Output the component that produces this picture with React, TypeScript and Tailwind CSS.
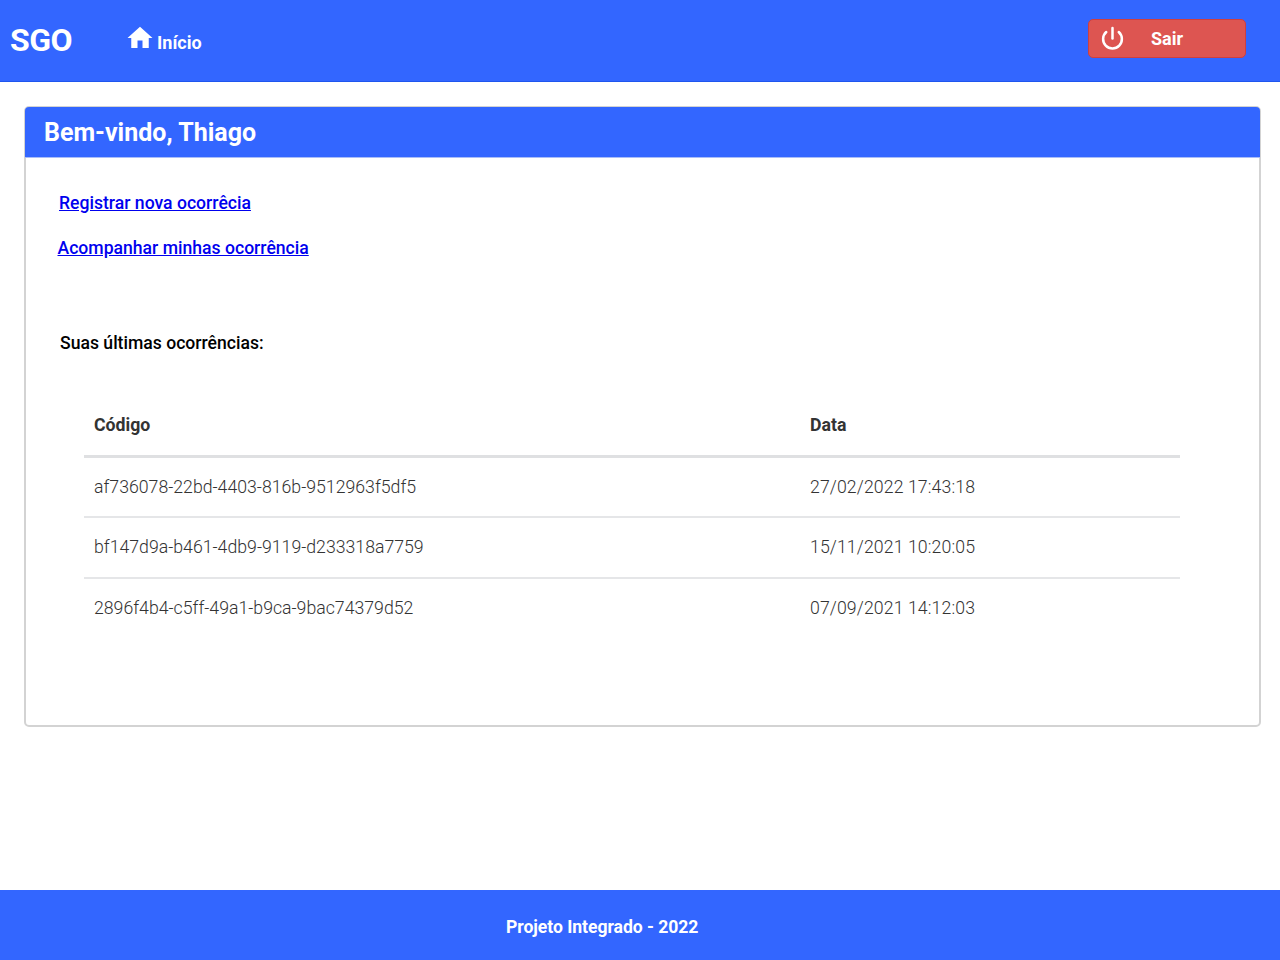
import React from "react";

const rows = [
  ["af736078-22bd-4403-816b-9512963f5df5", "27/02/2022 17:43:18"],
  ["bf147d9a-b461-4db9-9119-d233318a7759", "15/11/2021 10:20:05"],
  ["2896f4b4-c5ff-49a1-b9ca-9bac74379d52", "07/09/2021 14:12:03"],
];

export default function App() {
  return (
    <div className="flex h-[960px] flex-col bg-white font-['Roboto',sans-serif]">
      <header className="flex h-[82px] shrink-0 items-start border-b border-[#1f55ee] bg-[#3366ff] text-white">
        <div className="ml-[10px] mt-[21px] text-[32px] font-bold leading-[38px] tracking-[-0.5px]">SGO</div>
        <a className="ml-[53px] mt-[24px] flex items-start">
          <svg viewBox="0 0 24 24" className="h-[30px] w-[30px] fill-white -mt-[1px]">
            <path d="M10 20v-6h4v6h5v-8h3L12 3 2 12h3v8z" />
          </svg>
          <span className="ml-[2px] mt-[8px] text-[18px] font-bold leading-[21px]">Início</span>
        </a>
        <button className="ml-auto mr-[34px] mt-[19px] flex h-[39px] w-[158px] items-center rounded-[5px] border border-[#cf3f3f] bg-[#dd5551] pl-[11px] text-white">
          <svg viewBox="0 0 24 24" className="h-[25px] w-[25px] fill-none stroke-white stroke-[2.4]" strokeLinecap="round">
            <path d="M12 2v10" />
            <path d="M18 5.8a9 9 0 1 1-12 0" />
          </svg>
          <span className="ml-[26px] text-[18px] font-bold leading-[21px]">Sair</span>
        </button>
      </header>

      <main className="flex-1 px-[24px] pt-[24px] pr-[19px]">
        <section className="h-[621px] rounded-[5px] border-2 border-[#d3d3d3]">
          <h1 className="-mx-px -mt-px flex h-[51px] items-center rounded-t-[4px] border-b border-[#a9bdf8] bg-[#3366ff] pl-[19px] pt-[2px] text-[25px] font-bold text-white">
            Bem-vindo, Thiago
          </h1>
          <div className="flex flex-col items-start pt-[33px]">
            <a href="#" className="ml-[33px] text-[17.6px] font-medium leading-[25px] text-[#0000ee] underline">
              Registrar nova ocorrêcia
            </a>
            <a href="#" className="ml-[31.5px] mt-[20px] text-[17.6px] font-medium leading-[25px] text-[#0000ee] underline">
              Acompanhar minhas ocorrência
            </a>
            <p className="ml-[34px] mt-[70px] text-[17.6px] font-medium leading-[25px] text-black">
              Suas últimas ocorrências:
            </p>
            <table className="ml-[58px] mt-[39px] w-[1096px] table-fixed border-collapse text-[17.7px] leading-[25px] text-[#333333]">
              <thead>
                <tr className="h-[61px] border-b-[3px] border-[#dfe0e2]">
                  <th className="w-[716px] px-[10px] pt-[2px] text-left font-bold">Código</th>
                  <th className="px-[10px] pt-[2px] text-left font-bold">Data</th>
                </tr>
              </thead>
              <tbody className="font-light">
                {rows.map(([code, date], i) => (
                  <tr key={code} className={i < 2 ? "h-[61px] border-b-2 border-[#e5e6e8]" : "h-[60px]"}>
                    <td className={i === 0 ? "px-[10px] pt-[2px]" : "px-[10px]"}>{code}</td>
                    <td className={i === 0 ? "px-[10px] pt-[2px] tracking-[0.1px]" : "px-[10px] tracking-[0.1px]"}>{date}</td>
                  </tr>
                ))}
              </tbody>
            </table>
          </div>
        </section>
      </main>

      <footer className="flex h-[70px] shrink-0 items-center bg-[#3366ff] pl-[506px] pt-[4px] text-[17.6px] font-bold tracking-[-0.05px] text-white">
        Projeto Integrado - 2022
      </footer>
    </div>
  );
}
